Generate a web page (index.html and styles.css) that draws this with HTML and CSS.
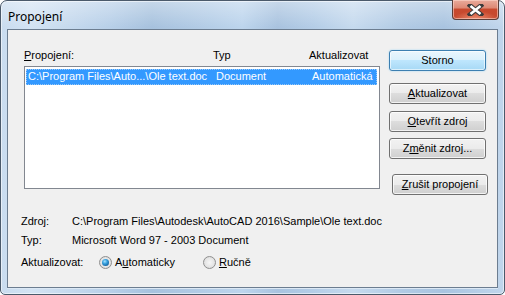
FILE: index.html
```html
<!DOCTYPE html>
<html lang="cs">
<head>
<meta charset="utf-8">
<title>Propojení</title>
<link rel="stylesheet" href="styles.css">
</head>
<body>
<div class="window">
  <div class="titlebar">
    <span class="title">Propojení</span>
    <div class="close">
      <svg width="17" height="12" viewBox="0 0 17 12">
        <path d="M3 1.5 L14 10.5 M14 1.5 L3 10.5" stroke="#3b3b3b" stroke-width="4.6" stroke-linecap="square" fill="none"/>
        <path d="M3.5 2 L13.5 10 M13.5 2 L3.5 10" stroke="#ffffff" stroke-width="2.6" stroke-linecap="butt" fill="none"/>
      </svg>
    </div>
  </div>
  <div class="client">
    <div class="top">
      <div class="links">
        <div class="head">
          <span class="c1"><u>P</u>ropojení:</span>
          <span class="c2">Typ</span>
          <span class="c3">Aktualizovat</span>
        </div>
        <div class="list">
          <div class="row selected">
            <span class="c1">C:\Program Files\Auto...\Ole text.doc</span>
            <span class="c2">Document</span>
            <span class="c3">Automatická</span>
          </div>
        </div>
      </div>
      <div class="buttons">
        <button class="btn default b-storno">Storno</button>
        <button class="btn b-akt"><u>A</u>ktualizovat</button>
        <button class="btn b-otv"><u>O</u>tevřít zdroj</button>
        <button class="btn b-zme">Z<u>m</u>ěnit zdroj...</button>
        <button class="btn b-zru"><u>Z</u>rušit propojení</button>
      </div>
    </div>
    <div class="info">
      <div class="info-row r-zdroj"><span class="lbl">Zdroj:</span><span class="val">C:\Program Files\Autodesk\AutoCAD 2016\Sample\Ole text.doc</span></div>
      <div class="info-row r-typ"><span class="lbl">Typ:</span><span class="val">Microsoft Word 97 - 2003 Document</span></div>
      <div class="info-row r-akt">
        <span class="lbl lbl-akt">Aktualizovat:</span>
        <span class="radio checked"><span class="dot"></span></span><span class="rlabel">A<u>u</u>tomaticky</span>
        <span class="radio r2"></span><span class="rlabel"><u>R</u>učně</span>
      </div>
    </div>
  </div>
</div>
</body>
</html>
```

FILE: styles.css
```css
html, body {
  margin: 0;
  padding: 0;
  width: 505px;
  height: 295px;
  overflow: hidden;
  background: #ffffff;
}

.window {
  box-sizing: border-box;
  width: 505px;
  height: 295px;
  border: 1px solid #4b5a6b;
  border-radius: 7px 7px 5px 5px;
  background:
    linear-gradient(180deg, rgba(255,255,255,0.35) 0px, rgba(255,255,255,0) 26px),
    linear-gradient(90deg, #c9dcef 0%, #d3e3f3 6%, #b7cfe8 22%, #a7c2de 30%, #b3cce6 40%, #bdd5ed 48%, #a9c3df 55%, #b4cde7 62%, #c6daee 70%, #b1cae4 80%, #a9c4e0 88%, #c1d6ec 100%);
  box-shadow: inset 0 0 0 1px rgba(255,255,255,0.55);
  display: flex;
  flex-direction: column;
  font-family: "Liberation Sans", Arial, sans-serif;
  font-size: 11px;
  color: #000;
}

.titlebar {
  height: 28px;
  display: flex;
  align-items: flex-start;
  justify-content: space-between;
  padding: 0 5px 0 7px;
}

.title {
  font-family: "Noto Sans", "Open Sans", sans-serif;
  font-size: 12px;
  line-height: 16px;
  margin-top: 8px;
  color: #000;
}

.close {
  box-sizing: border-box;
  width: 47px;
  height: 20px;
  margin-top: -1px;
  border: 1px solid #5a3f3a;
  border-top: none;
  border-radius: 0 0 4px 4px;
  background:
    radial-gradient(ellipse 70% 60% at 50% 100%, rgba(255,170,140,0.7), rgba(255,170,140,0) 70%),
    linear-gradient(180deg, #e9ab9c 0%, #de8a76 40%, #c8492e 50%, #c64a2f 100%);
  box-shadow: inset 0 0 0 1px rgba(255,220,210,0.55);
  display: flex;
  align-items: center;
  justify-content: center;
}

.close svg { display: block; }

.client {
  box-sizing: border-box;
  margin: 0 6px 6px 6px;
  height: 259px;
  border: 1px solid #6c7d90;
  background: #f0f0f0;
  box-shadow: 0 1px 0 #dbe8f5;
  padding: 0 0 0 13px;
  display: flex;
  flex-direction: column;
}

.top {
  display: flex;
  align-items: flex-start;
}

.links {
  margin-top: 19px;
  margin-left: 3px;
  width: 356px;
}

.head {
  display: grid;
  grid-template-columns: 189px 96px 1fr;
  line-height: 13px;
  height: 13px;
}

u { text-decoration: underline; text-underline-offset: 1px; }

.list {
  box-sizing: border-box;
  margin-top: 4px;
  height: 123px;
  border: 1px solid #828790;
  background: #fff;
  padding: 2px 2px 0 1px;
}

.row {
  box-sizing: border-box;
  height: 16px;
  display: grid;
  grid-template-columns: 188px 96px 1fr;
  line-height: 14px;
  padding-left: 2px;
}

.row.selected {
  background: #3399ff;
  color: #fff;
  outline: 1px dotted #9ac8f5;
  outline-offset: -1px;
}

.buttons {
  margin-left: 9px;
  margin-top: 20px;
  display: flex;
  flex-direction: column;
  align-items: flex-start;
}

.btn {
  box-sizing: border-box;
  width: 97px;
  height: 21px;
  padding: 0;
  border: 1px solid #707070;
  border-radius: 3px;
  background: linear-gradient(180deg, #f2f2f2 0%, #ebebeb 50%, #dddddd 50%, #cfcfcf 100%);
  box-shadow: inset 0 0 0 1px rgba(255,255,255,0.75);
  font-family: "Liberation Sans", Arial, sans-serif;
  font-size: 11px;
  line-height: 17px;
  color: #000;
}

.btn.default {
  border-color: #3c7fb1;
  background: linear-gradient(180deg, #eaf6fd 0%, #d9f0fc 50%, #bee6fd 50%, #a7d9f5 100%);
  box-shadow: inset 0 0 0 1px rgba(255,255,255,0.6), 0 0 2px #9ad6f7;
}

.b-akt { margin-top: 12px; }
.b-otv { margin-top: 7px; }
.b-zme { margin-top: 6px; }
.b-zru { margin-top: 15px; margin-left: 3px; width: 96px; }

.info {
  margin-top: 20px;
  display: flex;
  flex-direction: column;
}

.info-row {
  display: flex;
  align-items: center;
  line-height: 13px;
  height: 13px;
}

.r-typ { margin-top: 6px; }
.r-akt { margin-top: 9px; }

.lbl {
  width: 51px;
  flex: none;
}

.lbl-akt { width: 78px; }

.radio {
  box-sizing: border-box;
  width: 13px;
  height: 13px;
  border-radius: 50%;
  border: 1px solid #8f8f8f;
  background: radial-gradient(circle at 50% 50%, #f6f6f6 0%, #e4e4e4 60%, #d0d0d0 100%);
  display: flex;
  align-items: center;
  justify-content: center;
  flex: none;
}

.radio .dot {
  width: 7px;
  height: 7px;
  border-radius: 50%;
  background: radial-gradient(circle at 40% 35%, #a8e2ff 0%, #3aa3e0 35%, #0f5d9b 80%);
}

.rlabel {
  margin-left: 3px;
}

.r2 { margin-left: 28px; }
```
